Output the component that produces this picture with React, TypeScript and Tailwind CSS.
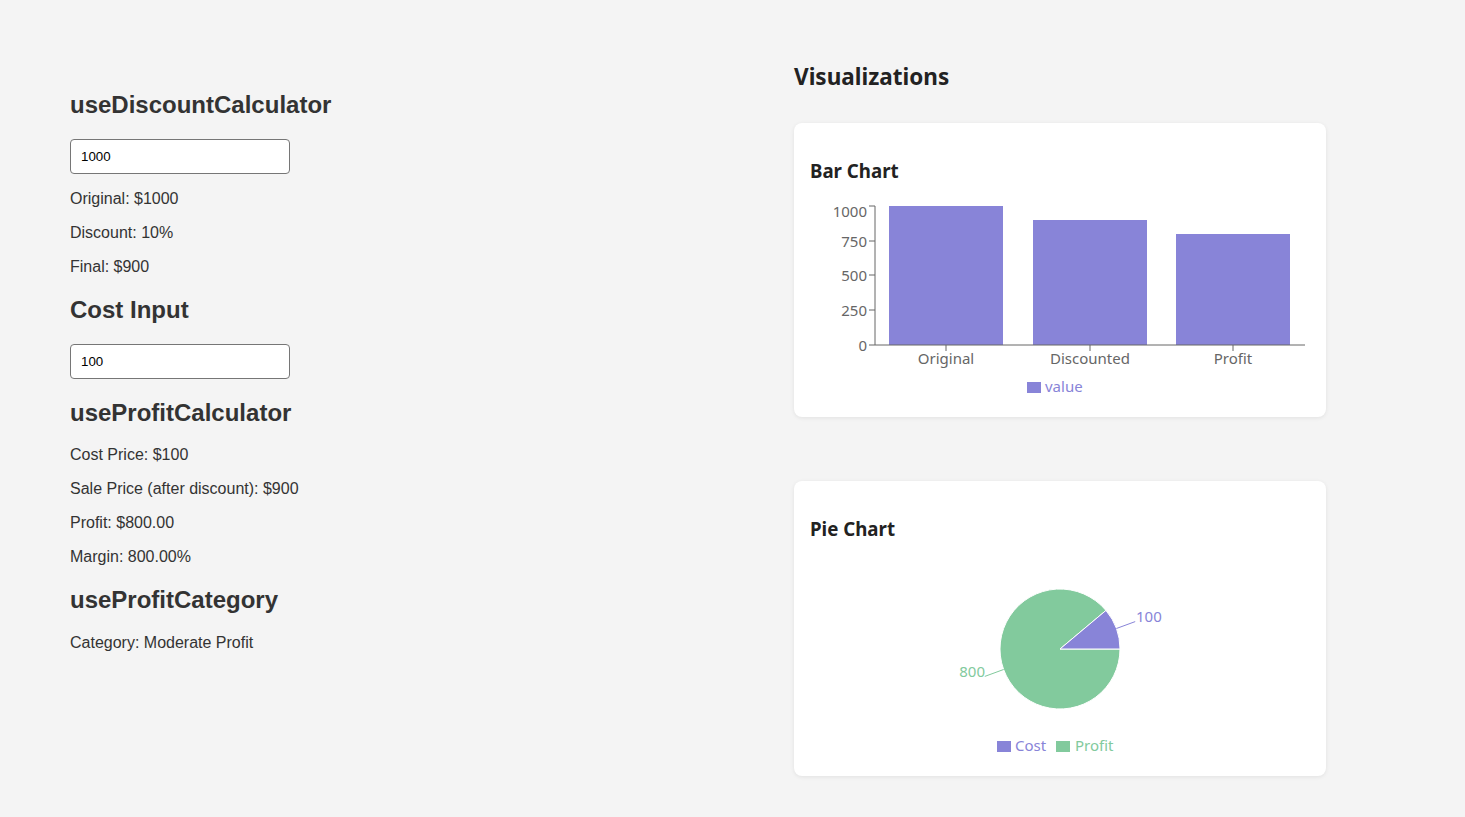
const seg = "font-['Noto_Sans','Open_Sans',sans-serif]"

function BarChartCard() {
    const bars = [
        { name: "Original", x: 79, top: 11 },
        { name: "Discounted", x: 223, top: 25 },
        { name: "Profit", x: 366, top: 39 },
    ]
    const ticks = [
        { v: "1000", y: 11, ly: 22 },
        { v: "750", y: 46, ly: 52 },
        { v: "500", y: 80, ly: 86 },
        { v: "250", y: 115, ly: 121 },
        { v: "0", y: 150, ly: 156 },
    ]
    return (
        <div className="bg-white rounded-lg shadow-[0_1px_4px_rgba(0,0,0,0.08)] px-4 pt-4 pb-4 flex flex-col">
            <h3 className={`${seg} mt-5 text-[18.7px] leading-6 font-bold text-[#222]`}>Bar Chart</h3>
            <svg width="500" height="206" className="mt-3" style={{ fontFamily: "'Noto Sans', sans-serif" }}>
                {bars.map((b) => (
                    <rect key={b.name} x={b.x} y={b.top} width="114" height={150 - b.top} fill="#8884d8" />
                ))}
                <line x1="65" y1="11" x2="65" y2="150" stroke="#666" />
                <line x1="65" y1="150" x2="495" y2="150" stroke="#666" />
                {ticks.map((t) => (
                    <g key={t.v}>
                        <line x1="59" y1={t.y} x2="65" y2={t.y} stroke="#666" />
                        <text x="57" y={t.ly} textAnchor="end" fontSize="15" fill="#666">{t.v}</text>
                    </g>
                ))}
                {bars.map((b) => (
                    <g key={b.name + "t"}>
                        <line x1={b.x + 57} y1="150" x2={b.x + 57} y2="156" stroke="#666" />
                        <text x={b.x + 57} y="169" textAnchor="middle" fontSize="15" fill="#666">{b.name}</text>
                    </g>
                ))}
                <rect x="217" y="187" width="14" height="11" fill="#8884d8" />
                <text x="235" y="197" fontSize="15" fill="#8884d8">value</text>
            </svg>
        </div>
    )
}

function PieChartCard() {
    return (
        <div className="bg-white rounded-lg shadow-[0_1px_4px_rgba(0,0,0,0.08)] px-4 pt-4 pb-4 flex flex-col">
            <h3 className={`${seg} mt-5 text-[18.7px] leading-6 font-bold text-[#222]`}>Pie Chart</h3>
            <svg width="500" height="207" className="mt-3" style={{ fontFamily: "'Noto Sans', sans-serif" }}>
                <path d="M250,96 L295.96,57.43 A60,60 0 1,0 310,96 Z" fill="#82ca9d" stroke="#fff" />
                <path d="M250,96 L310,96 A60,60 0 0,0 295.96,57.43 Z" fill="#8884d8" stroke="#fff" />
                <path d="M306.4,75.5 L325.2,68.6" stroke="#8884d8" fill="none" />
                <text x="326" y="69" fontSize="15" fill="#8884d8">100</text>
                <path d="M193.6,116.5 L174.8,123.4" stroke="#82ca9d" fill="none" />
                <text x="175" y="124" textAnchor="end" fontSize="15" fill="#82ca9d">800</text>
                <rect x="187" y="188" width="14" height="11" fill="#8884d8" />
                <text x="205" y="198" fontSize="15" fill="#8884d8">Cost</text>
                <rect x="246" y="188" width="14" height="11" fill="#82ca9d" />
                <text x="265" y="198" fontSize="15" fill="#82ca9d">Profit</text>
            </svg>
        </div>
    )
}

function Heading({ children, mt }: { children: string; mt: string }) {
    return <h2 className={`${mt} text-2xl leading-7 font-bold text-[#333]`}>{children}</h2>
}

function Line({ children, mt }: { children: string; mt: string }) {
    return <p className={`${mt} text-base leading-[18px] text-[#333]`}>{children}</p>
}

export default function App() {
    return (
        <div className="min-h-[817px] bg-[#f4f4f4] flex font-['Liberation_Sans',Arial,sans-serif]">
            <div className="w-[794px] pl-[70px] pt-[91px] flex flex-col">
                <Heading mt="mt-0">useDiscountCalculator</Heading>
                <input
                    defaultValue="1000"
                    className="mt-5 w-[220px] h-[35px] bg-white border border-[#767676] rounded-sm px-[10px] text-[13.3px] text-black"
                />
                <Line mt="mt-4">Original: $1000</Line>
                <Line mt="mt-4">Discount: 10%</Line>
                <Line mt="mt-4">Final: $900</Line>
                <Heading mt="mt-5">Cost Input</Heading>
                <input
                    defaultValue="100"
                    className="mt-5 w-[220px] h-[35px] bg-white border border-[#767676] rounded-sm px-[10px] text-[13.3px] text-black"
                />
                <Heading mt="mt-5">useProfitCalculator</Heading>
                <Line mt="mt-[19px]">Cost Price: $100</Line>
                <Line mt="mt-4">Sale Price (after discount): $900</Line>
                <Line mt="mt-4">Profit: $800.00</Line>
                <Line mt="mt-4">Margin: 800.00%</Line>
                <Heading mt="mt-5">useProfitCategory</Heading>
                <Line mt="mt-5">Category: Moderate Profit</Line>
            </div>
            <div className="w-[532px] pt-[62px] flex flex-col">
                <h2 className={`${seg} text-[22.5px] leading-[30px] font-bold text-[#222]`}>Visualizations</h2>
                <div className="mt-[31px] flex flex-col gap-[64px]">
                    <BarChartCard />
                    <PieChartCard />
                </div>
            </div>
        </div>
    )
}
